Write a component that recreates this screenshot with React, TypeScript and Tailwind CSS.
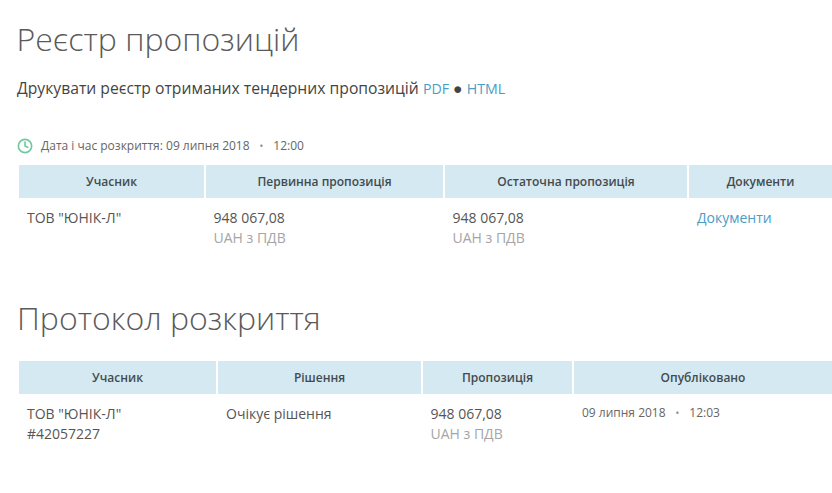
import React from 'react';
import { Clock } from 'lucide-react';

const headCell = 'h-[33px] flex items-center justify-center bg-[#d4e9f1] text-[12px] font-semibold text-[#444b4f]';
const bodyCell = 'pt-[10px] pl-[8px] text-[14px] leading-[20px] text-[#555]';

const Money = () => (
  <div className={`${bodyCell} -ml-[0.5px]`}>
    <div>948 067,08</div>
    <div className="text-[#a5a5a5]">UAH з ПДВ</div>
  </div>
);

const App: React.FC = () => {
  return (
    <div className="h-[493px] w-[832px] overflow-hidden bg-white font-['Open_Sans',sans-serif]">
      <div className="pl-[17px] pt-[17px]">
        <h1 className="-ml-[0.5px] text-[32px] font-light leading-[44px] text-[#5a5a5a]">Реєстр пропозицій</h1>
        <p className="mt-[16px] text-[15.7px] leading-[22px] text-[#444]">
          Друкувати реєстр отриманих тендерних пропозицій <a className="text-[14.2px] text-[#4d9cc4]">PDF</a> ● <a className="text-[14.2px] text-[#4d9cc4]">HTML</a>
        </p>
        <div className="mt-[36px] flex h-[20px] items-center text-[12px] text-[#666]">
          <Clock size={16} strokeWidth={2.5} className="-ml-[0.5px] text-[#72c9a0]" />
          <span className="ml-[8.5px]">Дата і час розкриття: 09 липня 2018</span>
          <span className="ml-[10px] text-[10px] text-[#888]">•</span>
          <span className="ml-[10px]">12:00</span>
        </div>
      </div>

      <div className="ml-[19px] mt-[9px] grid grid-cols-[185px_237px_242px_1fr] gap-x-[2px]">
        <div className={headCell}>Учасник</div>
        <div className={headCell}>Первинна пропозиція</div>
        <div className={headCell}>Остаточна пропозиція</div>
        <div className={headCell}>Документи</div>
        <div className={bodyCell}>ТОВ "ЮНІК-Л"</div>
        <Money />
        <Money />
        <div className={bodyCell}><a className="text-[#4d9cc4]">Документи</a></div>
      </div>

      <h2 className="ml-[17px] mt-[48px] text-[32px] font-light leading-[44px] text-[#5a5a5a]">Протокол розкриття</h2>

      <div className="ml-[19px] mt-[21px] grid grid-cols-[197px_203px_149px_1fr] gap-x-[2px]">
        <div className={headCell}>Учасник</div>
        <div className={headCell}>Рішення</div>
        <div className={headCell}>Пропозиція</div>
        <div className={headCell}>Опубліковано</div>
        <div className={bodyCell}>
          <div>ТОВ "ЮНІК-Л"</div>
          <div>#42057227</div>
        </div>
        <div className={bodyCell}>Очікує рішення</div>
        <Money />
        <div className="flex h-[20px] items-center pl-[8px] pt-[18px] text-[12px] text-[#666]">
          <span>09 липня 2018</span>
          <span className="ml-[10px] text-[10px] text-[#888]">•</span>
          <span className="ml-[10px]">12:03</span>
        </div>
      </div>
    </div>
  );
};

export default App;
